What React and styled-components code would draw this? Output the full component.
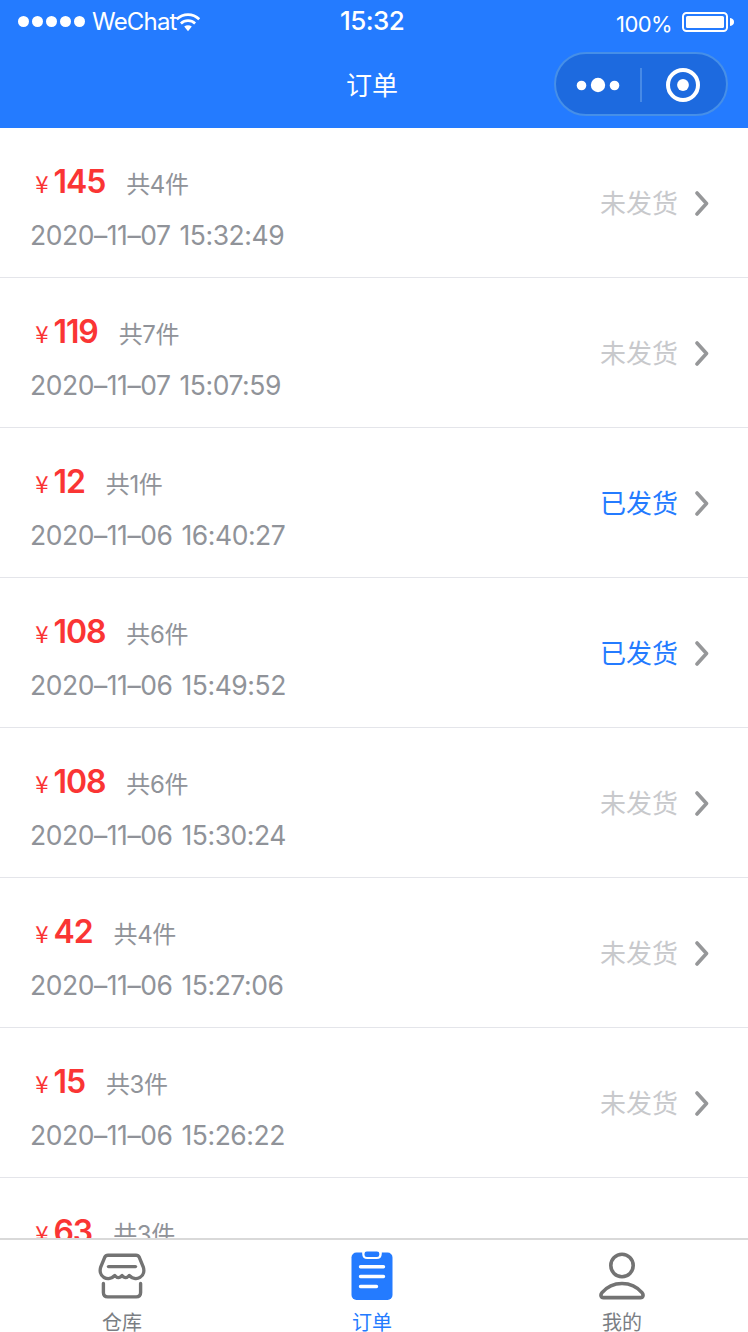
import React from 'react';
import styled, { createGlobalStyle } from 'styled-components';

const orders = [
  { price: 145, count: 4, time: '2020–11–07 15:32:49', status: '未发货' },
  { price: 119, count: 7, time: '2020–11–07 15:07:59', status: '未发货' },
  { price: 12, count: 1, time: '2020–11–06 16:40:27', status: '已发货' },
  { price: 108, count: 6, time: '2020–11–06 15:49:52', status: '已发货' },
  { price: 108, count: 6, time: '2020–11–06 15:30:24', status: '未发货' },
  { price: 42, count: 4, time: '2020–11–06 15:27:06', status: '未发货' },
  { price: 15, count: 3, time: '2020–11–06 15:26:22', status: '未发货' },
  { price: 63, count: 3 },
];

const WifiIcon = () => (
  <svg width="24" height="20" viewBox="0 0 24 20" fill="none" stroke="#fff" strokeWidth="2.7">
    <path d="M0.8 7.2C7 1 17 1 23.2 7.2" />
    <path d="M4.9 11.4C9 7.6 15 7.6 19.1 11.4" />
    <path d="M8.2 14.6C10.5 12.7 13.5 12.7 15.8 14.6L12 19.2Z" fill="#fff" stroke="none" />
  </svg>
);

const BatteryIcon = () => (
  <svg width="52" height="20" viewBox="0 0 52 20">
    <rect x="1" y="1" width="44" height="18" rx="3.5" fill="none" stroke="#fff" strokeWidth="2" />
    <rect x="4" y="4" width="38" height="12" rx="1.5" fill="#fff" />
    <path d="M48 6C51 6.5 52 8 52 10S51 13.5 48 14Z" fill="#fff" />
  </svg>
);

const StoreIcon = () => (
  <svg width="48" height="48" viewBox="0 0 48 48" fill="none" stroke="#737373" strokeWidth="3.4" strokeLinecap="round" strokeLinejoin="round">
    <path d="M10 3.2H38Q40.3 3.2 41.3 5.3L45.2 14.8C46.4 18.4 46 23.1 42 25.4C38.5 27.4 34 26.4 31.2 23.5C28.5 26.6 26 26 24 23.5C22 26 19.5 26.6 16.8 23.5C14 26.4 9.5 27.4 6 25.4C2 23.1 1.6 18.4 2.8 14.8L6.7 5.3Q7.7 3.2 10 3.2Z" />
    <path d="M10.5 14.6H37.5" />
    <path d="M5.4 31.5V40.5Q5.4 44.9 9.8 44.9H38.2Q42.6 44.9 42.6 40.5V31.5" />
  </svg>
);

const OrderIcon = () => (
  <svg width="42" height="50" viewBox="0 0 42 50">
    <rect x="0.5" y="1.6" width="41" height="47.4" rx="5" fill="#247bff" />
    <path d="M11.2 0V2.5Q11.2 8 16.3 8H25.7Q30.8 8 30.8 2.5V0Z" fill="#fff" />
    <rect x="13.5" y="0.4" width="14.8" height="5.6" rx="2.3" fill="#247bff" />
    <path d="M9.5 15.7H32.5M9.5 25.5H32.5M9.5 35.5H25.5" stroke="#fff" strokeWidth="3.4" strokeLinecap="round" />
  </svg>
);

const UserIcon = () => (
  <svg width="46" height="48" viewBox="0 0 46 48" fill="none" stroke="#737373" strokeWidth="3.6">
    <circle cx="23" cy="13.5" r="11.2" />
    <path d="M4.5 45.6H41.5C44.2 45.6 44.8 42.8 43 40.7C38 34.7 30.8 31.5 23 31.5S8 34.7 3 40.7C1.2 42.8 1.8 45.6 4.5 45.6Z" />
  </svg>
);

const App = () => {
  return (
    <Page>
      <GlobalStyle />
      <Header>
        <Signal>
          {[1, 2, 3, 4, 5].map((n) => (
            <SignalDot key={n} />
          ))}
        </Signal>
        <Carrier>WeChat</Carrier>
        <WifiIcon />
        <Clock>15:32</Clock>
        <Battery>
          <BatteryText>100%</BatteryText>
          <BatteryIcon />
        </Battery>
      </Header>
      <NavBar>
        <Title>订单</Title>
        <Capsule>
          <svg width="44" height="16" viewBox="0 0 44 16" fill="#fff">
            <circle cx="5.5" cy="8.5" r="4.8" />
            <circle cx="22" cy="8" r="7.2" />
            <circle cx="38.5" cy="8.5" r="4.8" />
          </svg>
          <CapsuleLine />
          <svg width="34" height="34" viewBox="0 0 34 34">
            <circle cx="17" cy="17" r="15" fill="none" stroke="#fff" strokeWidth="4" />
            <circle cx="17" cy="17" r="5.9" fill="#fff" />
          </svg>
        </Capsule>
      </NavBar>

      <List>
        {orders.map((order, index) => (
          <Row key={index}>
            <Info>
              <PriceLine>
                <Yen>¥</Yen>
                <Price>{order.price}</Price>
                <Count>共{order.count}件</Count>
              </PriceLine>
              {order.time && <Time>{order.time}</Time>}
            </Info>
            {order.status && (
              <Status $sent={order.status === '已发货'}>{order.status}</Status>
            )}
            <svg width="14" height="26" viewBox="0 0 14 26" fill="none" stroke="#969799" strokeWidth="3.6" strokeLinecap="round" strokeLinejoin="round">
              <path d="M2 3L11.5 13.5L2 24" />
            </svg>
          </Row>
        ))}
      </List>

      <TabBar>
        <Tab>
          <TabIcon><StoreIcon /></TabIcon>
          <TabLabel>仓库</TabLabel>
        </Tab>
        <Tab $active>
          <TabIcon><OrderIcon /></TabIcon>
          <TabLabel>订单</TabLabel>
        </Tab>
        <Tab>
          <TabIcon><UserIcon /></TabIcon>
          <TabLabel>我的</TabLabel>
        </Tab>
      </TabBar>
    </Page>
  );
};

export default App;

const GlobalStyle = createGlobalStyle`
  * {
    box-sizing: border-box;
  }
  body {
    margin: 0;
    font-family: Inter, 'Noto Sans CJK SC', sans-serif;
  }
  svg {
    display: block;
    flex-shrink: 0;
  }
`;

const Page = styled.div`
  width: 748px;
  height: 1332px;
  display: flex;
  flex-direction: column;
  overflow: hidden;
  background: #fff;
`;

const Header = styled.div`
  height: 44px;
  display: grid;
  grid-template-columns: 74px 84px 24px 1fr auto;
  align-items: center;
  padding: 0 14px 0 18px;
  background: #247bff;
  color: #fff;
  flex-shrink: 0;
`;

const Signal = styled.div`
  display: flex;
  gap: 3px;
  margin-top: -1px;
`;

const SignalDot = styled.span`
  width: 11px;
  height: 11px;
  border-radius: 50%;
  background: #fff;
`;

const Carrier = styled.span`
  font-size: 24px;
  line-height: 30px;
  letter-spacing: -0.8px;
`;

const Clock = styled.span`
  padding-left: 140px;
  font-size: 26px;
  line-height: 30px;
  font-weight: 500;
  letter-spacing: -0.6px;
  margin-top: -2px;
`;

const Battery = styled.div`
  display: flex;
  align-items: center;
  gap: 10px;
`;

const BatteryText = styled.span`
  font-size: 22px;
  line-height: 26px;
  letter-spacing: -0.6px;
  margin-top: 4px;
`;

const NavBar = styled.div`
  height: 84px;
  display: grid;
  grid-template-columns: 554px 174px;
  align-items: center;
  padding-bottom: 4px;
  background: #247bff;
  flex-shrink: 0;
`;

const Title = styled.div`
  padding: 3px 0 0 346px;
  color: #fff;
  font-size: 26px;
  line-height: 36px;
`;

const Capsule = styled.div`
  height: 64px;
  display: flex;
  align-items: center;
  padding: 2px 0 0 20px;
  border: 2px solid #468fe8;
  border-radius: 32px;
  background: #1d6adf;
`;

const CapsuleLine = styled.span`
  width: 2px;
  height: 34px;
  margin: 0 24px 0 20px;
  background: #478ae6;
`;

const List = styled.div`
  flex: 1;
  min-height: 0;
  overflow: hidden;
`;

const Row = styled.div`
  height: 150px;
  display: flex;
  align-items: center;
  padding: 0 39px 0 30px;
  border-bottom: 1px solid #e4e5ea;
`;

const Info = styled.div`
  flex: 1;
  height: 121px;
  padding-top: 15px;
`;

const PriceLine = styled.div`
  display: flex;
  align-items: baseline;
  height: 50px;
  line-height: 49px;
`;

const Yen = styled.span`
  width: 24px;
  color: #fa3534;
  font-family: 'Noto Sans CJK SC', sans-serif;
  font-size: 24px;
  text-align: center;
`;

const Price = styled.span`
  margin-left: -0.5px;
  color: #fa3534;
  font-size: 32px;
  font-weight: 600;
  letter-spacing: -1.1px;
`;

const Count = styled.span`
  margin-left: 21px;
  color: #909399;
  font-size: 24px;
  letter-spacing: -0.4px;
`;

const Time = styled.div`
  height: 56px;
  color: #909399;
  font-size: 26.5px;
  line-height: 56px;
  letter-spacing: -0.45px;
  word-spacing: 2px;
  white-space: nowrap;
`;

const Status = styled.span`
  margin: 2px 17px 0 0;
  color: ${(props) => (props.$sent ? '#247bff' : '#c8c9cc')};
  font-size: 26px;
  line-height: 36px;
`;

const TabBar = styled.div`
  width: 754px;
  height: 94px;
  display: flex;
  margin-left: -3px;
  border-top: 2px solid #d9d9d9;
  background: #fff;
  flex-shrink: 0;
`;

const Tab = styled.div`
  width: 250px;
  display: flex;
  flex-direction: column;
  align-items: center;
  color: ${(props) => (props.$active ? '#247bff' : '#7a7e83')};
`;

const TabIcon = styled.div`
  height: 50px;
  display: flex;
  align-items: center;
  margin-top: 11px;
  flex-shrink: 0;
`;

const TabLabel = styled.span`
  margin-top: 12px;
  font-size: 20px;
  line-height: 20px;
  flex-shrink: 0;
`;
